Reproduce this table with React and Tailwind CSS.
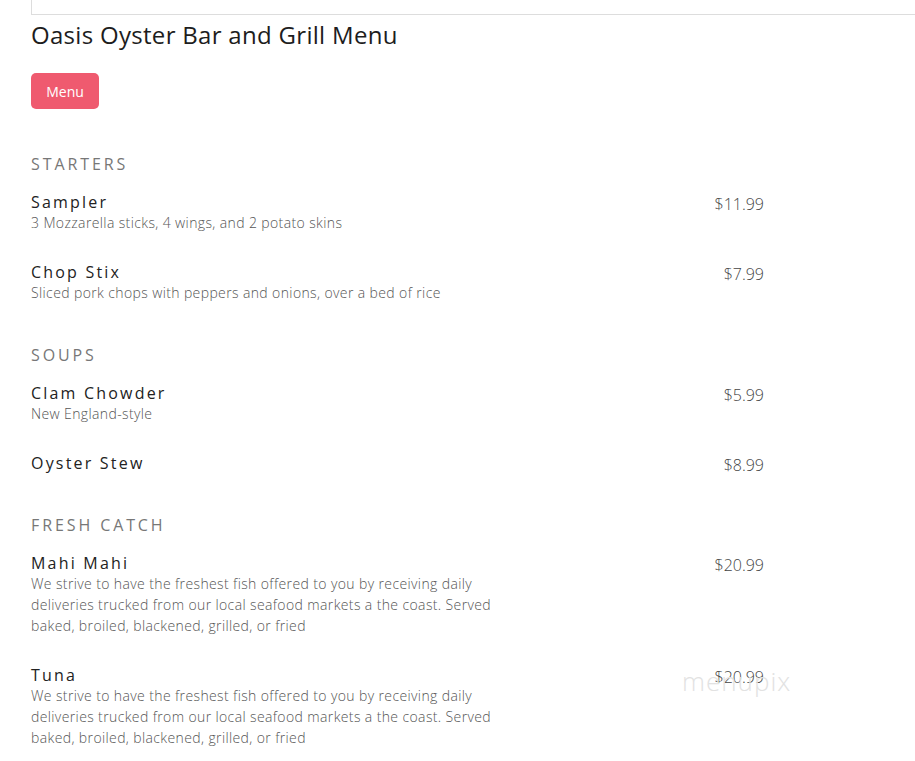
const sections = [
  {
    title: 'Starters',
    items: [
      { name: 'Sampler', desc: '3 Mozzarella sticks, 4 wings, and 2 potato skins', price: '$11.99' },
      { name: 'Chop Stix', desc: 'Sliced pork chops with peppers and onions, over a bed of rice', price: '$7.99' },
    ],
  },
  {
    title: 'Soups',
    items: [
      { name: 'Clam Chowder', desc: 'New England-style', price: '$5.99' },
      { name: 'Oyster Stew', desc: '', price: '$8.99' },
    ],
  },
  {
    title: 'Fresh Catch',
    items: [
      {
        name: 'Mahi Mahi',
        desc: 'We strive to have the freshest fish offered to you by receiving daily deliveries trucked from our local seafood markets a the coast. Served baked, broiled, blackened, grilled, or fried',
        price: '$20.99',
      },
      {
        name: 'Tuna',
        desc: 'We strive to have the freshest fish offered to you by receiving daily deliveries trucked from our local seafood markets a the coast. Served baked, broiled, blackened, grilled, or fried',
        price: '$20.99',
      },
    ],
  },
];

const MenuItem = ({ item }) => (
  <div className={item.desc ? 'flex w-[733px] pb-[29px]' : 'flex w-[733px] pb-[27px]'}>
    <div className="w-[475px]">
      <div className="text-[16px] leading-[20px] tracking-[2.2px] text-[#222]">{item.name}</div>
      {item.desc && (
        <p className="text-[14px] leading-[21px] tracking-[0.38px] text-[#555] font-light">{item.desc}</p>
      )}
    </div>
    <div className="flex-1 text-right text-[16px] leading-[20px] pt-[2px] text-[#444] font-light">{item.price}</div>
  </div>
);

const App = () => {
  return (
    <div className="relative min-h-screen bg-white overflow-hidden" style={{ fontFamily: '"Open Sans", "Noto Sans", sans-serif' }}>
      <div className="ml-[31px] h-[15px] border-l border-b border-[#ddd]" />
      <div className="pl-[31px]">
        <h1 className="mt-[5px] text-[24px] leading-[30px] tracking-[0.3px] text-[#1d1d1d]">Oasis Oyster Bar and Grill Menu</h1>
        <button className="mt-[23px] h-[36px] w-[68px] rounded-[5px] bg-[#ef5a6f] text-[14px] text-white">
          Menu
        </button>

        <div className="mt-[43px]">
          {sections.map((section) => (
            <div key={section.title} className="mb-[11px]">
              <h2 className="mb-[16px] text-[16px] leading-[24px] uppercase tracking-[2.9px] text-[#777]">
                {section.title}
              </h2>
              {section.items.map((item) => (
                <MenuItem key={item.name} item={item} />
              ))}
            </div>
          ))}
        </div>
      </div>

      {/* watermark */}
      <div className="absolute left-[682px] top-[662px] text-[26px] font-light tracking-[1px] text-[#e2e2e2] pointer-events-none">
        menupix
      </div>
    </div>
  );
};

export default App;
